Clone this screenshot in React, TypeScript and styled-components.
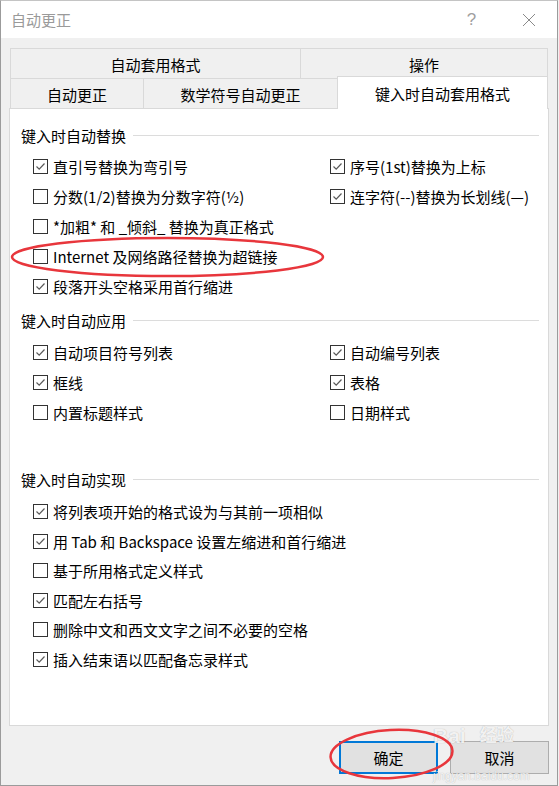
import React from 'react';
import styled, { createGlobalStyle } from 'styled-components';

const GlobalStyle = createGlobalStyle`
  html, body {
    margin: 0;
    padding: 0;
    background: #f0f0f0;
  }
  body {
    font-family: "Noto Sans CJK SC", "Liberation Sans", sans-serif;
  }
`;

const Window = styled.div`
  position: relative;
  width: 558px;
  height: 786px;
  box-sizing: border-box;
  border: 1px solid #9b9b9b;
  border-top-color: #c4c4c4;
  background: #f0f0f0;
  display: flex;
  flex-direction: column;
  font-family: "Noto Sans CJK SC", "Liberation Sans", sans-serif;
  font-size: 15px;
  color: #000;
  overflow: hidden;
`;

const TitleBar = styled.div`
  height: 37px;
  background: #fff;
  display: flex;
  align-items: center;
  padding-left: 10px;
`;

const TitleText = styled.div`
  flex: 1;
  color: #9a9a9a;
  font-size: 15px;
`;

const TitleButton = styled.div`
  width: 57px;
  height: 37px;
  display: flex;
  align-items: center;
  justify-content: center;
  color: #a0a0a0;
  font-family: "Liberation Sans", sans-serif;
  font-size: 17px;
`;

const Body = styled.div`
  flex: 1;
  display: flex;
  flex-direction: column;
  padding: 10px 9px 0 8px;
`;

const TabRow = styled.div`
  display: flex;
  align-items: flex-end;
  height: 30px;
  margin-left: 1px;
`;

const Tab = styled.div<{ $w: number; $active?: boolean }>`
  position: relative;
  box-sizing: border-box;
  width: ${(p) => p.$w}px;
  height: ${(p) => (p.$active ? 33 : 30)}px;
  margin-right: -1px;
  margin-bottom: ${(p) => (p.$active ? -1 : 0)}px;
  z-index: ${(p) => (p.$active ? 2 : 0)};
  background: ${(p) => (p.$active ? '#fff' : '#f0f0f0')};
  border: 1px solid #d9d9d9;
  border-bottom: none;
  display: flex;
  align-items: center;
  justify-content: center;
  padding-top: ${(p) => (p.$active ? 0 : 2)}px;
  white-space: nowrap;
`;

const Panel = styled.div`
  position: relative;
  box-sizing: border-box;
  width: 540px;
  height: 618px;
  background: #fff;
  border: 1px solid #d9d9d9;
  padding: 11px 9px 0 11px;
`;

const SectionHeader = styled.div<{ $top: number }>`
  display: flex;
  align-items: center;
  height: 30px;
  gap: 7px;
  margin-top: ${(p) => p.$top}px;
  white-space: nowrap;

  &::after {
    content: '';
    flex: 1;
    height: 1px;
    background: #dcdcdc;
  }
`;

const ItemGrid = styled.div<{ $row: number }>`
  display: grid;
  grid-template-columns: 297px 1fr;
  grid-auto-rows: ${(p) => p.$row}px;
  margin-left: 12px;
  margin-top: 2px;
`;

const Item = styled.div<{ $col: number; $line: number }>`
  grid-column: ${(p) => p.$col};
  grid-row: ${(p) => p.$line};
  display: flex;
  align-items: center;
  gap: 5px;
  white-space: nowrap;
`;

const Box = styled.span`
  box-sizing: border-box;
  width: 15px;
  height: 15px;
  border: 1px solid #333;
  background: #fff;
  display: flex;
  align-items: center;
  justify-content: center;
  flex: none;
`;

const Footer = styled.div`
  display: flex;
  justify-content: flex-end;
  gap: 12px;
  padding-top: 15px;
  width: 540px;
`;

const Button = styled.div<{ $primary?: boolean }>`
  box-sizing: border-box;
  width: 99px;
  height: 33px;
  background: #e1e1e1;
  border: ${(p) => (p.$primary ? '2px solid #0078d7' : '1px solid #adadad')};
  display: flex;
  align-items: center;
  justify-content: center;
`;

const Overlay = styled.svg`
  position: absolute;
  left: -1px;
  top: -1px;
  pointer-events: none;
  z-index: 5;
`;

const Watermark = styled.div`
  position: absolute;
  left: 432px;
  top: 722px;
  width: 100px;
  z-index: 4;
  pointer-events: none;
  color: rgba(255, 255, 255, 0.85);
  text-shadow: 0 0 1px rgba(0, 0, 0, 0.3);
  font-family: "Liberation Sans", "Noto Sans CJK SC", sans-serif;
`;

const MarkTop = styled.div`
  display: flex;
  align-items: flex-end;
  gap: 14px;
  font-size: 21px;
  font-weight: bold;
  line-height: 26px;
`;

const MarkSmall = styled.div`
  margin-top: 20px;
  font-size: 12px;
  line-height: 14px;
`;

type Opt = { label: string; on: boolean; col?: number; line: number };

const Check = ({ on }: { on: boolean }) => (
  <Box>
    {on && (
      <svg width="13" height="13" viewBox="0 0 13 13">
        <polyline points="2.5,6.5 5.2,9.2 10.5,3.5" fill="none" stroke="#5a5a5a" strokeWidth="1.2" />
      </svg>
    )}
  </Box>
);

const Section = ({ title, top, row, items }: { title: string; top: number; row: number; items: Opt[] }) => (
  <>
    <SectionHeader $top={top}>{title}</SectionHeader>
    <ItemGrid $row={row}>
      {items.map((it, i) => (
        <Item key={i} $col={it.col ?? 1} $line={it.line}>
          <Check on={it.on} />
          <span>{it.label}</span>
        </Item>
      ))}
    </ItemGrid>
  </>
);

const replaceItems: Opt[] = [
  { label: '直引号替换为弯引号', on: true, line: 1 },
  { label: '序号(1st)替换为上标', on: true, col: 2, line: 1 },
  { label: '分数(1/2)替换为分数字符(½)', on: false, line: 2 },
  { label: '连字符(--)替换为长划线(—)', on: true, col: 2, line: 2 },
  { label: '*加粗* 和 _倾斜_ 替换为真正格式', on: false, line: 3 },
  { label: 'Internet 及网络路径替换为超链接', on: false, line: 4 },
  { label: '段落开头空格采用首行缩进', on: true, line: 5 },
];

const applyItems: Opt[] = [
  { label: '自动项目符号列表', on: true, line: 1 },
  { label: '自动编号列表', on: true, col: 2, line: 1 },
  { label: '框线', on: true, line: 2 },
  { label: '表格', on: true, col: 2, line: 2 },
  { label: '内置标题样式', on: false, line: 3 },
  { label: '日期样式', on: false, col: 2, line: 3 },
];

const doItems: Opt[] = [
  { label: '将列表项开始的格式设为与其前一项相似', on: true, line: 1 },
  { label: '用 Tab 和 Backspace 设置左缩进和首行缩进', on: true, line: 2 },
  { label: '基于所用格式定义样式', on: false, line: 3 },
  { label: '匹配左右括号', on: true, line: 4 },
  { label: '删除中文和西文文字之间不必要的空格', on: false, line: 5 },
  { label: '插入结束语以匹配备忘录样式', on: true, line: 6 },
];

export default function App() {
  return (
    <>
      <GlobalStyle />
      <Window>
        <TitleBar>
          <TitleText>自动更正</TitleText>
          <TitleButton>?</TitleButton>
          <TitleButton>
            <svg width="14" height="14" viewBox="0 0 14 14">
              <path d="M1 1 L13 13 M13 1 L1 13" stroke="#8a8a8a" strokeWidth="1" />
            </svg>
          </TitleButton>
        </TitleBar>
        <Body>
          <TabRow>
            <Tab $w={291}>自动套用格式</Tab>
            <Tab $w={248}>操作</Tab>
          </TabRow>
          <TabRow>
            <Tab $w={134}>自动更正</Tab>
            <Tab $w={195}>数学符号自动更正</Tab>
            <Tab $w={211} $active>键入时自动套用格式</Tab>
          </TabRow>
          <Panel>
            <Section title="键入时自动替换" top={0} row={29.8} items={replaceItems} />
            <Section title="键入时自动应用" top={5} row={30} items={applyItems} />
            <Section title="键入时自动实现" top={37} row={29.5} items={doItems} />
          </Panel>
          <Footer>
            <Button $primary>确定</Button>
            <Button>取消</Button>
          </Footer>
        </Body>
        <Watermark>
          <MarkTop>
            <span>Bai</span>
            <span style={{ fontSize: 17 }}>经验</span>
          </MarkTop>
          <MarkSmall>jingyan.baidu.com</MarkSmall>
        </Watermark>
        <Overlay width="559" height="786" viewBox="0 0 559 786">
          <ellipse cx="167.5" cy="257" rx="155.5" ry="19" fill="none" stroke="#e8363c" strokeWidth="2.5" />
          <ellipse cx="391.5" cy="754" rx="61" ry="24" fill="none" stroke="#e8363c" strokeWidth="2.5" transform="rotate(-3 391.5 754)" />
        </Overlay>
      </Window>
    </>
  );
}
